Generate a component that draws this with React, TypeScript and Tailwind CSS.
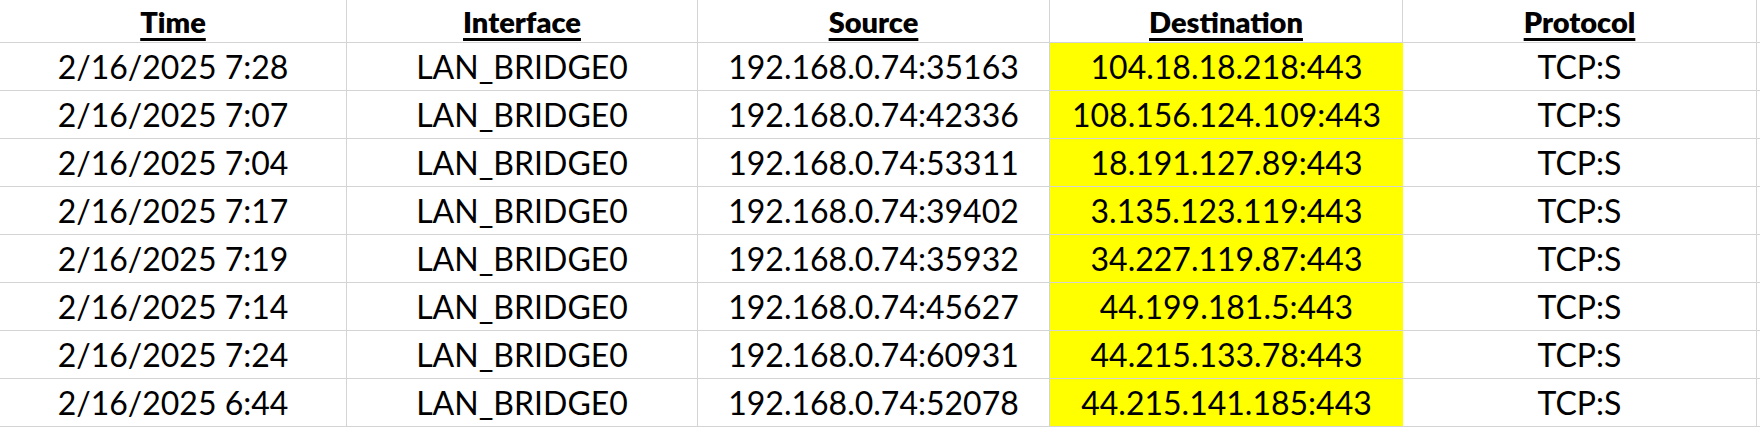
const rows = [
  ["2/16/2025 7:28", "192.168.0.74:35163", "104.18.18.218:443"],
  ["2/16/2025 7:07", "192.168.0.74:42336", "108.156.124.109:443"],
  ["2/16/2025 7:04", "192.168.0.74:53311", "18.191.127.89:443"],
  ["2/16/2025 7:17", "192.168.0.74:39402", "3.135.123.119:443"],
  ["2/16/2025 7:19", "192.168.0.74:35932", "34.227.119.87:443"],
  ["2/16/2025 7:14", "192.168.0.74:45627", "44.199.181.5:443"],
  ["2/16/2025 7:24", "192.168.0.74:60931", "44.215.133.78:443"],
  ["2/16/2025 6:44", "192.168.0.74:52078", "44.215.141.185:443"],
];

const headers = ["Time", "Interface", "Source", "Destination", "Protocol"];
const cols = "grid-cols-[347px_351px_352px_353px_354px]";

const App = () => {
  return (
    <div
      className="w-[1760px] h-[427px] bg-white text-black overflow-hidden"
      style={{ fontFamily: "Lato, 'Open Sans', sans-serif" }}
    >
      <div className={`grid ${cols} h-[43px] border-b border-[#d4d4d4]`}>
        {headers.map((h) => (
          <div key={h} className="flex items-center justify-center border-r border-[#d4d4d4]">
            <span className="text-[29px] leading-none font-extrabold underline underline-offset-[5px] decoration-[3px]">{h}</span>
          </div>
        ))}
      </div>
      {rows.map(([time, src, dst]) => (
        <div key={src} className={`grid ${cols} h-[48px] border-b border-[#d4d4d4] text-[32px] leading-none`}>
          <div className="flex items-center justify-center border-r border-[#d4d4d4]">{time}</div>
          <div className="flex items-center justify-center border-r border-[#d4d4d4]">LAN_BRIDGE0</div>
          <div className="flex items-center justify-center border-r border-[#d4d4d4]">{src}</div>
          <div className="flex items-center justify-center bg-[#ffff00]">{dst}</div>
          <div className="flex items-center justify-center border-r border-[#d4d4d4]">TCP:S</div>
        </div>
      ))}
    </div>
  );
};

export default App;
